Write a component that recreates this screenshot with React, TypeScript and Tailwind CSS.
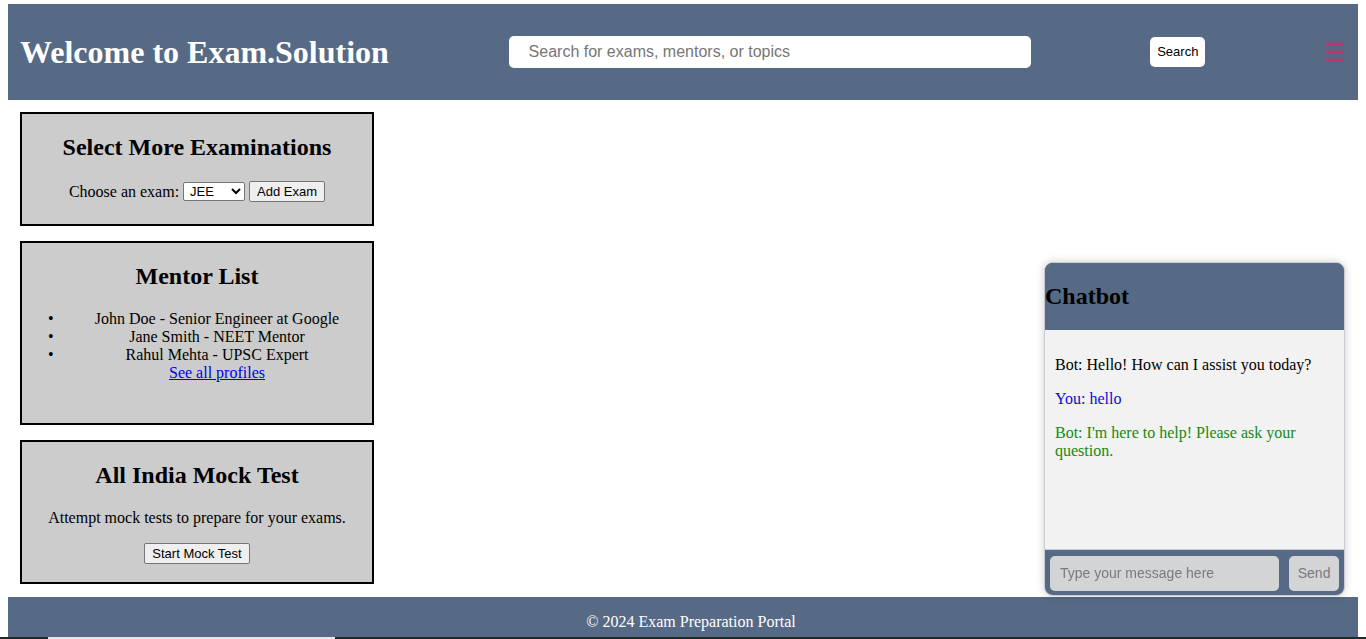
import { useState } from "react";

const mentors = [
  "John Doe - Senior Engineer at Google",
  "Jane Smith - NEET Mentor",
  "Rahul Mehta - UPSC Expert",
];

function Card({ title, pb, children }: { title: string; pb: string; children: React.ReactNode }) {
  return (
    <div className={`w-[354px] border-2 border-black bg-[#cccccc] px-[20px] pt-[20px] text-center ${pb}`}>
      <h2 className="mb-[20px] text-[24px] font-bold leading-[27px]">{title}</h2>
      {children}
    </div>
  );
}

function Chatbot() {
  const [text, setText] = useState("");
  return (
    <div className="fixed right-[21px] bottom-[43px] flex h-[334px] w-[301px] flex-col overflow-hidden rounded-[9px] border border-[#c8ccd2] bg-[#566a85] shadow-[0_0_8px_rgba(0,0,0,0.2)]">
      <div className="h-[67px] shrink-0 bg-[#566a85]">
        <h2 className="mt-[20px] text-[24px] font-bold leading-[27px] text-black">Chatbot</h2>
      </div>
      <div className="h-[220px] shrink-0 border-b border-[#c8ccd2] bg-[#f2f2f2] px-[10px] pt-[26px] text-[16px] leading-[18px]">
        <p className="mb-[16px] text-black">Bot: Hello! How can I assist you today?</p>
        <p className="mb-[16px] text-[#0c0cd0]">You: hello</p>
        <p className="text-[#138a13]">Bot: I'm here to help! Please ask your question.</p>
      </div>
      <div className="flex flex-1 items-center gap-[10px] px-[5px] pt-[1px]">
        <input
          value={text}
          onChange={(e) => setText(e.target.value)}
          placeholder="Type your message here"
          className="h-[35px] w-[230px] rounded-[5px] bg-[#d3d4d6] px-[10px] font-['Liberation_Sans',Arial,sans-serif] text-[14px] text-black outline-none placeholder:text-[#7a7a7a]"
        />
        <button className="h-[35px] w-[50px] rounded-[5px] bg-[#d3d4d6] font-['Liberation_Sans',Arial,sans-serif] text-[14px] text-[#7a7a7a]">
          Send
        </button>
      </div>
    </div>
  );
}

export default function App() {
  return (
    <div className="min-h-[639px] bg-white px-[8px] pt-[4px] font-['Liberation_Serif','Times_New_Roman',serif] text-[16px] text-black">
      <header className="flex h-[96px] items-center justify-between bg-[#566a85] px-[12px]">
        <h1 className="text-[32px] font-bold leading-[37px] text-white">Welcome to Exam.Solution</h1>
        <input
          placeholder="Search for exams, mentors, or topics"
          className="h-[32px] w-[522px] rounded-[5px] bg-white px-[20px] font-['Liberation_Sans',Arial,sans-serif] text-[16px] outline-none placeholder:text-[#767676]"
        />
        <button className="h-[30px] w-[55px] rounded-[5px] bg-white font-['Liberation_Sans',Arial,sans-serif] text-[13px] text-black">
          Search
        </button>
        <svg width="20" height="22" viewBox="0 0 20 22" className="mr-[1px]">
          <g stroke="#c2326f" strokeWidth="2.6">
            <line x1="1" y1="3" x2="19" y2="3" />
            <line x1="1" y1="11" x2="19" y2="11" />
            <line x1="1" y1="19" x2="19" y2="19" />
          </g>
        </svg>
      </header>

      <main className="flex flex-col gap-[15px] px-[12px] pt-[12px] pb-[13px]">
        <Card title="Select More Examinations" pb="pb-[22px]">
          <div className="flex items-center justify-center gap-[4px] leading-[18px]">
            <span>Choose an exam:</span>
            <select className="h-[19px] w-[62px] rounded-[2px] border border-[#767676] bg-white pl-[2px] font-['Liberation_Sans',Arial,sans-serif] text-[13px]">
              <option>JEE</option>
              <option>NEET</option>
              <option>UPSC</option>
            </select>
            <button className="h-[21px] rounded-[2px] border border-[#767676] bg-[#efefef] px-[7px] font-['Liberation_Sans',Arial,sans-serif] text-[13px]">
              Add Exam
            </button>
          </div>
        </Card>

        <Card title="Mentor List" pb="pb-[20px]">
          <ul className="pb-[21px] pl-[40px] leading-[18px]">
            {mentors.map((m) => (
              <li
                key={m}
                className="relative before:absolute before:left-[-34px] before:top-0 before:text-[16px] before:content-['•']"
              >
                {m}
              </li>
            ))}
            <div>
              <a href="#" className="text-[#0000ee] underline">
                See all profiles
              </a>
            </div>
          </ul>
        </Card>

        <Card title="All India Mock Test" pb="pb-[18px]">
          <p className="mb-[16px] leading-[18px]">Attempt mock tests to prepare for your exams.</p>
          <div className="flex justify-center">
            <button className="h-[21px] rounded-[2px] border border-[#767676] bg-[#efefef] px-[7px] font-['Liberation_Sans',Arial,sans-serif] text-[13px]">
              Start Mock Test
            </button>
          </div>
        </Card>
      </main>

      <footer className="h-[48px] bg-[#566a85] pl-[16px] pt-[16px] text-center leading-[18px] text-white">
        © 2024 Exam Preparation Portal
      </footer>

      <Chatbot />

      <div className="fixed bottom-0 left-0 flex h-[2px] w-full bg-[#1e2a28]">
        <div className="ml-[48px] w-[287px] bg-[#e6e7eb]" />
      </div>
    </div>
  );
}
